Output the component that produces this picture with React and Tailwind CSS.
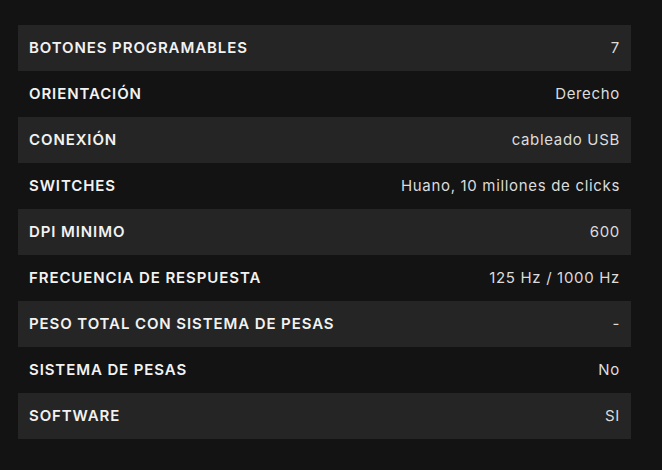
const specs = [
  ["BOTONES PROGRAMABLES", "7"],
  ["ORIENTACIÓN", "Derecho"],
  ["CONEXIÓN", "cableado USB"],
  ["SWITCHES", "Huano, 10 millones de clicks"],
  ["DPI MINIMO", "600"],
  ["FRECUENCIA DE RESPUESTA", "125 Hz / 1000 Hz"],
  ["PESO TOTAL CON SISTEMA DE PESAS", "-"],
  ["SISTEMA DE PESAS", "No"],
  ["SOFTWARE", "SI"],
]

export default function App() {
  return (
    <div className="w-[662px] h-[470px] bg-[#131313] pt-[25px] pl-[18px] font-['Inter','Open_Sans',sans-serif]">
      <div className="w-[613px] flex flex-col">
        {specs.map(([label, value], i) => (
          <div
            key={label}
            className={`h-[46px] flex items-center justify-between px-[11px] ${i % 2 === 0 ? "bg-[#252525]" : "bg-[#131313]"}`}
          >
            <span className="text-[15px] font-semibold tracking-[0.06em] text-[#f2f2f2]">{label}</span>
            <span className="text-[15px] tracking-[0.045em] text-[#dcdcdc]">{value}</span>
          </div>
        ))}
      </div>
    </div>
  )
}
